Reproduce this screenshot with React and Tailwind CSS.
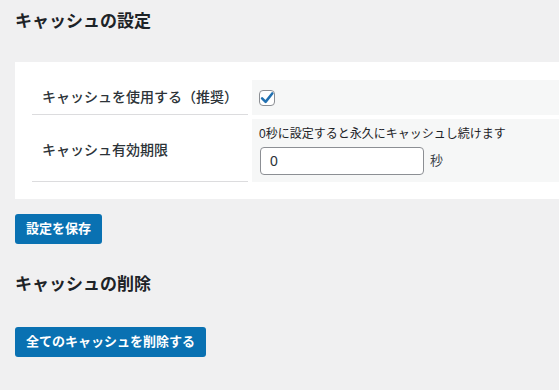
export default function App() {
  const font = { fontFamily: '"Liberation Sans", "Noto Sans CJK JP", sans-serif' };
  return (
    <div style={font} className="min-h-screen bg-[#f0f0f1] pl-[15px] pt-[10px] text-[#1d2327]">
      <h2 className="text-[17px] leading-[24px] font-bold text-[#1d2327]">キャッシュの設定</h2>

      <div className="mt-[28px] bg-white pt-[18px] pl-[17px] pb-[17px] flex flex-col gap-[4px]">
        <div className="flex gap-[4px] h-[35px]">
          <div className="w-[216px] border-b border-[#dcdcde] flex items-center pl-[10px] text-[14px] font-medium text-[#2c3338]">
            キャッシュを使用する（推奨）
          </div>
          <div className="flex-1 bg-[#f6f7f7] flex items-center pl-[7px]">
            <span className="w-[16px] h-[16px] rounded-[4px] border border-[#8c8f94] bg-white flex items-center justify-center">
              <svg width="14" height="14" viewBox="0 0 20 20">
                <path d="M3 10.5 L8 15.5 L17.5 3.5" fill="none" stroke="#2271b1" strokeWidth="3.6" strokeLinecap="round" strokeLinejoin="round" />
              </svg>
            </span>
          </div>
        </div>

        <div className="flex gap-[4px] h-[63px]">
          <div className="w-[216px] border-b border-[#dcdcde] flex items-center pl-[10px] text-[14px] font-medium text-[#2c3338]">
            キャッシュ有効期限
          </div>
          <div className="flex-1 bg-[#f6f7f7] pl-[7px] pt-[7px]">
            <p className="text-[12px] leading-[16px] text-[#1d2327]">0秒に設定すると永久にキャッシュし続けます</p>
            <div className="mt-[5px] flex items-center gap-[6px]">
              <div className="ml-px w-[164px] h-[28px] rounded-[4px] border border-[#8c8f94] bg-white flex items-center pl-[9px] text-[14px] text-[#2c3338]">
                0
              </div>
              <span className="text-[13px] text-[#3c434a]">秒</span>
            </div>
          </div>
        </div>
      </div>

      <button className="mt-[15px] h-[30px] px-[11px] rounded-[3px] bg-[#0971b2] text-white text-[13px] font-semibold leading-[30px]">
        設定を保存
      </button>

      <h2 className="mt-[29px] text-[17px] leading-[24px] font-bold text-[#1d2327]">キャッシュの削除</h2>

      <button className="mt-[30px] h-[30px] px-[11px] rounded-[3px] bg-[#0971b2] text-white text-[13px] font-semibold leading-[30px]">
        全てのキャッシュを削除する
      </button>
    </div>
  );
}
